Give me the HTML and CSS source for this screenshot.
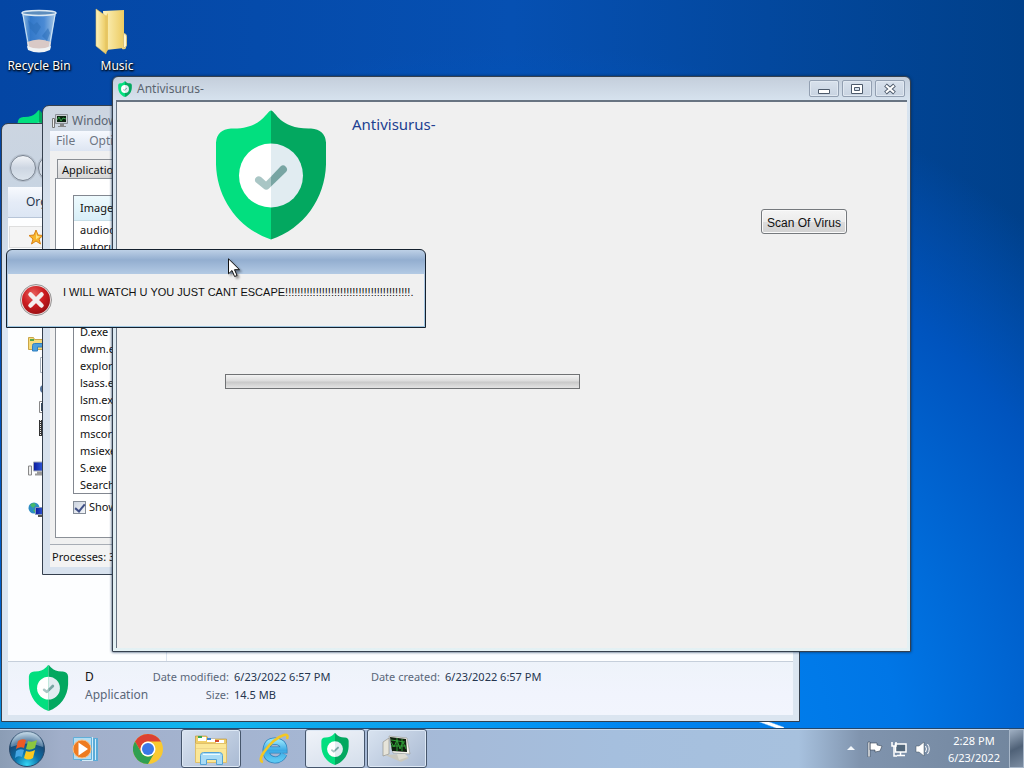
FILE: index.html
```html
<!DOCTYPE html>
<html lang="en">
<head>
<meta charset="utf-8">
<meta name="viewport" content="width=device-width, initial-scale=1">
<title>Desktop</title>
<link rel="stylesheet" href="styles.css">
</head>
<body>
<svg class="defs" aria-hidden="true">
  <defs>
    <linearGradient id="glass" x1="0" x2="1"><stop offset="0" stop-color="#b9dcf3"/><stop offset=".25" stop-color="#3f85d2"/><stop offset=".65" stop-color="#5c9be0"/><stop offset="1" stop-color="#d5ecf8"/></linearGradient>
    <linearGradient id="fold" x1="0" x2="1"><stop offset="0" stop-color="#fdf3bd"/><stop offset="1" stop-color="#eccb62"/></linearGradient>
    <radialGradient id="orb" cx=".5" cy=".95" r=".9"><stop offset="0" stop-color="#35d6f5"/><stop offset=".4" stop-color="#0b70a8"/><stop offset=".75" stop-color="#174a78"/><stop offset="1" stop-color="#a8c3d6"/></radialGradient>
    <radialGradient id="red" cx=".4" cy=".3" r=".8"><stop offset="0" stop-color="#e8605c"/><stop offset=".5" stop-color="#cc1c20"/><stop offset="1" stop-color="#8e0c10"/></radialGradient>
    <linearGradient id="ie" x1="0" y1="0" x2="0" y2="1"><stop offset="0" stop-color="#8fe0fa"/><stop offset=".5" stop-color="#3aa8e4"/><stop offset="1" stop-color="#5cc8f2"/></linearGradient>
    <linearGradient id="screen" x1="0" x2="1"><stop offset="0" stop-color="#0a1a9c"/><stop offset="1" stop-color="#3a6ae8"/></linearGradient>
  </defs>
  <symbol id="shield" viewBox="0 0 110 129">
    <path fill="#02df7f" d="M55 0C50 1 46 19 15 18Q1 19 0 32V54C1 88 22 118 55 129Z"/>
    <path fill="#03a860" d="M55 0C60 1 64 19 95 18Q109 19 110 32V54C109 88 88 118 55 129Z"/>
    <path fill="#fff" d="M55 33A32 32 0 0 0 55 97Z"/>
    <path fill="#e1ecf1" d="M55 33A32 32 0 0 1 55 97Z"/>
    <path fill="#a9c6c5" d="M39.500 71.500a3.800 3.800 0 0 1 5.500-5l5 4.500 5-5v10l-2 2a4 4 0 0 1-5.500 0z"/>
    <path fill="#78a5a3" d="M55 66l9.500-10a3.900 3.900 0 0 1 5.500 5.500L55 76z"/>
  </symbol>
  <symbol id="monitor" viewBox="0 0 16 14">
    <path fill="#eee" stroke="#777" d="M.5 4.500h2v9h-2z"/>
    <path fill="#c9cdd2" stroke="#8b9098" d="M3.500 .5h12v9h-12z"/>
    <path fill="#0b2410" d="M5 2h9v6H5z"/>
    <path fill="none" stroke="#35a049" d="M5 6l2-3 2 4 2-3 3 1"/>
    <path fill="#888" d="M8 10h4v2h2v1H6v-1h2z"/>
  </symbol>
  <symbol id="pc" viewBox="0 0 18 15">
    <path fill="#eee" stroke="#888" d="M.5 4.500h3v9h-3z"/>
    <path fill="url(#screen)" stroke="#a8adb8" d="M5.500 .5h12v9h-12z"/>
    <path fill="#999" d="M9 10h5v2h2v2H7v-2h2z"/>
  </symbol>
  <symbol id="folder-lib" viewBox="0 0 36 32">
    <path fill="#f0cf69" stroke="#b98d33" stroke-width=".6" d="M2.500 6V3h11l2 3h18v23h-31z"/>
    <path fill="#fff" d="M5 4h8v4H5zM14 6h8v3h-8zM23 7h8v3h-8z"/>
    <path fill="#35a852" d="M5 3h4v2H5z"/><path fill="#d54c2e" d="M22 7h4v2h-4z"/><path fill="#3b84d6" d="M14 5h4v2h-4z"/>
    <path fill="#fbe797" stroke="#e0c06a" d="M2.500 10.500h31v19h-31z"/>
    <path fill="none" stroke="#eed68a" d="M3 15.500h30"/>
    <path fill="#a8dbf5" stroke="#55a2d4" d="M7.500 31.500v-9q0-3 3-3h16q3 0 3 3v9h-6v-5h-10v5z"/>
    <path stroke="#eafaff" d="M10 21.500h17" fill="none"/>
  </symbol>
</svg>

<main class="desktop">
  <ul class="shortcuts">
    <li class="shortcut">
      <svg class="shortcut-icon" viewBox="0 0 48 48" aria-hidden="true">
        <path fill="url(#glass)" fill-opacity=".8" d="M7 4h34l-6 37q-11 5-22 0z"/>
        <path fill="#d9c9c6" d="M12 34q12-5 24 0l-1 7q-11 5-22 0z"/>
        <path fill="#f0f3f5" d="M12 38q12 5 24 0l-1 4q-11 5-22 0z"/>
        <path fill="#2d6fbb" fill-opacity=".6" d="M15 20l7-6 4 5-5 8zM27 28l6-8 2 5-3 8zM13 12l6 5-4 4z"/>
        <ellipse cx="24" cy="5" rx="17" ry="2.500" fill="#5d8dbd" stroke="#dce9f3" stroke-width="1.500"/>
        <path fill="none" stroke="#e3f2fb" stroke-opacity=".8" d="M8 7l6 33M40 7l-6 33"/>
      </svg>
      <span>Recycle Bin</span>
    </li>
    <li class="shortcut">
      <svg class="shortcut-icon" viewBox="0 0 48 48" aria-hidden="true">
        <path fill="url(#fold)" d="M10 3L31 2v38l-18 2z"/>
        <path fill="#e9c863" d="M13 8l2-3v37l-2 3z"/>
        <path fill="#f0d579" d="M31 26l2 1v13q-1 2-4 1z"/>
        <path fill="#fff6cf" stroke="#d8c37c" d="M30.500 25.500q3 0 3 3v9q-1 3-3 2z"/>
        <path fill="url(#fold)" stroke="#dfc067" stroke-width=".6" d="M3 1l10 7v38L3 38z"/>
      </svg>
      <span>Music</span>
    </li>
    <li class="shortcut">
      <svg class="shortcut-icon" aria-hidden="true"><use href="#shield"/></svg>
      <span>D</span>
    </li>
  </ul>

  <section class="window explorer" aria-label="File explorer">
    <div class="explorer-nav">
      <button class="round" aria-label="Back"></button><button class="round forward" aria-label="Forward"></button>
    </div>
    <div class="explorer-body">
      <div class="toolbar"><button class="plain">Organize</button></div>
      <div class="explorer-main">
        <nav class="tree" aria-label="Places">
          <div class="favorites"><svg class="star" viewBox="0 0 16 16" aria-hidden="true"><path fill="#f8b52c" stroke="#d98316" d="M8 1l2 5 5 .5-4 3.500 1.500 5L8 12l-4.500 3L5 10 1 6.500 6 6z"/><path fill="#fde58a" d="M8 3l1 4 3 .5-3 2-1 1z"/></svg></div>
          <svg class="node libraries" viewBox="0 0 16 16" aria-hidden="true"><path fill="#f6db7c" stroke="#c9a548" d="M.5 1.500h5l1 2h9v10H.5z"/><path fill="#52a84e" d="M2 3h4v2H2z"/><path fill="#4da0dc" stroke="#2f7fc0" d="M4.500 15V9.500q0-2 2-2h9V11h-6v4z"/></svg>
          <svg class="node leaf" viewBox="0 0 16 16" aria-hidden="true"><path fill="#fff" stroke="#a8b2bd" d="M1.500 .5h12v15h-12z"/></svg>
          <svg class="node leaf" viewBox="0 0 16 16" aria-hidden="true"><circle cx="5" cy="11" r="4" fill="#55749b"/><path fill="none" stroke="#55749b" stroke-width="2" d="M8 11V1l5 2"/></svg>
          <svg class="node leaf" viewBox="0 0 16 16" aria-hidden="true"><path fill="#fff" stroke="#888" d="M.5 2.500h14v11H.5z"/><path fill="#34495e" d="M2 4h11v8H2z"/></svg>
          <svg class="node leaf" viewBox="0 0 16 16" aria-hidden="true"><path fill="#333" d="M0 0h15v16H0z"/><path stroke="#eee" stroke-width="1" stroke-dasharray="1 1" d="M1.500 0v16"/></svg>
          <svg class="node computer" aria-hidden="true"><use href="#pc"/></svg>
          <svg class="node network" viewBox="0 0 18 16" aria-hidden="true"><circle cx="6" cy="6" r="5.500" fill="#2c8cc4"/><path fill="#45b86a" d="M2 3q4-4 6 0l-3 3zM5 8l4-1-2 4z"/><path fill="url(#screen)" stroke="#8899b8" d="M7.500 5.500h10v7h-10z"/><path fill="#555" d="M10 13h5v2h-5z"/></svg>
        </nav>
        <div class="files"></div>
      </div>
      <footer class="details">
        <svg class="details-icon" aria-hidden="true"><use href="#shield"/></svg>
        <div class="details-name"><strong>D</strong><span>Application</span></div>
        <dl class="facts"><dt>Date modified:</dt><dd>6/23/2022 6:57 PM</dd><dt>Size:</dt><dd>14.5 MB</dd></dl>
        <dl class="facts"><dt>Date created:</dt><dd>6/23/2022 6:57 PM</dd></dl>
      </footer>
    </div>
  </section>

  <section class="window taskmgr" aria-label="Task manager">
    <header class="task-title"><svg class="mini-monitor" aria-hidden="true"><use href="#monitor"/></svg><span>Windows Task Manager</span></header>
    <div class="task-body">
      <nav class="menu"><button class="plain">File</button><button class="plain">Options</button></nav>
      <div class="tabs"><button class="tab">Applications</button></div>
      <div class="tab-page">
        <table class="processes">
          <thead><tr><th>Image Name</th></tr></thead>
          <tbody>
            <tr><td>audiodg.exe</td></tr><tr><td>autoruns.exe</td></tr><tr><td></td></tr><tr><td></td></tr>
            <tr><td></td></tr><tr><td></td></tr><tr><td>D.exe</td></tr><tr><td>dwm.exe</td></tr>
            <tr><td>explorer.exe</td></tr><tr><td>lsass.exe</td></tr><tr><td>lsm.exe</td></tr><tr><td>mscorsvw.exe</td></tr>
            <tr><td>mscorsvw.exe</td></tr><tr><td>msiexec.exe</td></tr><tr><td>S.exe</td></tr><tr><td>SearchIndexer.exe</td></tr>
          </tbody>
        </table>
        <label class="show-all"><input type="checkbox" checked>Show processes from all users</label>
      </div>
      <footer class="task-status">Processes: 37</footer>
    </div>
  </section>

  <section class="window app" aria-labelledby="app-title">
    <header class="app-title">
      <svg class="app-icon" aria-hidden="true"><use href="#shield"/></svg>
      <span id="app-title">Antivisurus-</span>
      <div class="caption">
        <button aria-label="Minimize"><svg viewBox="0 0 12 12" aria-hidden="true"><path fill="#fff" stroke="#4d5a6b" d="M.5 6.500h11v4H.5z"/></svg></button>
        <button aria-label="Maximize"><svg viewBox="0 0 12 12" aria-hidden="true"><path fill="#fff" stroke="#4d5a6b" d="M.5 1.500h11v9H.5z"/><path fill="#d5dfeb" stroke="#4d5a6b" d="M3.500 4.500h5v3h-5z"/></svg></button>
        <button aria-label="Close"><svg viewBox="0 0 12 12" aria-hidden="true"><path stroke="#4d5a6b" stroke-width="4" d="M1.500 2l9 8M10.500 2l-9 8"/><path stroke="#fff" stroke-width="2.200" d="M2 2.500l8 7M10 2.500l-8 7"/></svg></button>
      </div>
    </header>
    <div class="client">
      <div class="hero">
        <svg class="logo" aria-hidden="true"><use href="#shield"/></svg>
        <h1>Antivisurus-</h1>
        <button class="scan">Scan Of Virus</button>
      </div>
      <progress class="bar" value="0" max="100" aria-label="Scan progress"></progress>
    </div>
  </section>

  <section class="window dialog" role="alertdialog" aria-labelledby="message">
    <div class="dialog-body">
      <svg class="error" viewBox="0 0 32 32" aria-hidden="true"><circle cx="16" cy="16" r="15.500" fill="#ecdcdc" stroke="#969696"/><circle cx="16" cy="16" r="14" fill="url(#red)"/><path stroke="#f4eeee" stroke-width="4.500" stroke-linecap="round" d="M10.500 10.500l11 11M21.500 10.500l-11 11"/></svg>
      <p id="message">I WILL WATCH U YOU JUST CANT ESCAPE!!!!!!!!!!!!!!!!!!!!!!!!!!!!!!!!!!!!!!!!!.</p>
    </div>
  </section>

  <svg class="cursor" viewBox="0 0 13 20" aria-hidden="true"><path fill="#fff" stroke="#111" d="M.5 .8v15l3.500-3.300 2.600 6 2.500-1-2.600-5.800h5z"/></svg>
</main>

<footer class="taskbar">
  <button class="start" aria-label="Start"><svg viewBox="0 0 38 38" aria-hidden="true"><circle cx="19" cy="19" r="17.500" fill="url(#orb)" stroke="#28496a"/><path fill="#dcecf5" fill-opacity=".35" d="M3 17a16 16 0 0 1 32 0q-16-7-32 0z"/><path fill="#ee5a24" d="M10 11q4-3 8-1l-2 8q-4-2-8 1z"/><path fill="#8cc63f" d="M20 11q4 2 9-1l-2 8q-5 3-9 1z"/><path fill="#45a6e4" d="M8 21q4-3 8-1l-2 7q-4-2-7 1z"/><path fill="#fbc91f" d="M18 21q4 2 9-1l-2 8q-5 3-9 0z"/></svg></button>
  <button class="task" aria-label="Media Player"><svg viewBox="0 0 30 30" aria-hidden="true"><path fill="#5aabd8" d="M9 4h18v23H9z"/><path fill="#d0ecf9" d="M11 3h11v24H11zM24 5h1v21h-1z"/><path fill="#b2ddf3" stroke="#62afd8" d="M2.500 3.500h18v22h-18z"/><circle cx="11" cy="15" r="9" fill="#ee7b20" stroke="#f9bd82"/><path fill="#fff" d="M7.500 8.500L17 15l-9.500 6.500z"/></svg></button>
  <button class="task" aria-label="Chrome"><svg viewBox="0 0 30 30" aria-hidden="true"><circle cx="15" cy="15" r="15" fill="#f9c930"/><path fill="#dc4132" d="M2 7.500A15 15 0 0 1 28 7.500H15A7.500 7.500 0 0 0 8.500 18.700z"/><path fill="#2f9f50" d="M2 7.500A15 15 0 0 0 15 30l6.500-11.300A7.500 7.500 0 0 1 8.500 18.700z"/><circle cx="15" cy="15" r="7.500" fill="#fff"/><circle cx="15" cy="15" r="6" fill="#3b78e7"/></svg></button>
  <button class="task open" aria-label="Explorer"><svg class="wide" viewBox="0 0 36 32" aria-hidden="true"><use href="#folder-lib"/></svg></button>
  <button class="task" aria-label="Internet Explorer"><svg viewBox="0 0 30 30" aria-hidden="true"><path fill="none" stroke="#2d83bd" stroke-width="7" d="M25 20q-3 6-9 6-9-1-9-10 1-9 9-9 9 1 9 9H9"/><path fill="none" stroke="url(#ie)" stroke-width="5.500" d="M25 20q-3 6-9 6-9-1-9-10 1-9 9-9 9 1 9 9H9"/><path fill="none" stroke="#f3c724" stroke-width="2.500" d="M4 28q-5-1 1-10Q15 4 25 1q5-1 3 4"/></svg></button>
  <button class="task open active" aria-label="Antivisurus-"><svg aria-hidden="true"><use href="#shield"/></svg></button>
  <button class="task open" aria-label="Task manager"><svg class="wide" viewBox="0 0 36 32" aria-hidden="true"><path fill="#e6e4da" stroke="#8b8a80" stroke-width=".6" d="M4 9l6-4v16l-6 2z"/><path fill="#c9c8be" d="M6 22l17-1 7 4-8 4z"/><path fill="#f4f3ee" stroke="#92928b" stroke-width=".6" d="M10 3l18 2 3 16-17-1z"/><path fill="#10200f" d="M11 4l16 2 1 13-15-1z"/><path fill="none" stroke="#2e9c36" d="M12 9l3 5 3-7 3 9 3-7 3 7M12 13h15M12 7l14 2M18 5v13M23 6v12"/><path fill="#dddcd3" d="M18 21h8l3 3-9 3z"/></svg></button>
  <div class="tray">
    <svg class="arrow" viewBox="0 0 8 5" aria-hidden="true"><path fill="#f4f8fc" d="M4 0l4 4H0z"/></svg>
    <svg viewBox="0 0 16 16" aria-hidden="true"><path fill="#fff" stroke="#354354" stroke-width=".6" d="M1 1h2v15H1zM3 2h7v2l5 1-2 5-5 1V9H3z"/></svg>
    <svg viewBox="0 0 16 16" aria-hidden="true"><path fill="#52677b" stroke="#fff" stroke-width="1.500" d="M4.500 3h10.500v8H4.500z"/><path fill="none" stroke="#fff" stroke-width="1.500" d="M1 1v4h4V1M3 5v10h3M9.500 11v3M6 14.500h8"/></svg>
    <svg viewBox="0 0 16 16" aria-hidden="true"><path fill="#fff" stroke="#42505f" stroke-width=".5" d="M1 5h3l5-4v14l-5-4H1z"/><path fill="none" stroke="#fff" d="M10.500 5q2 3 0 6M12.500 3q3.500 5 0 10"/></svg>
    <time class="clock" datetime="2022-06-23T14:28"><span>2:28 PM</span><span>6/23/2022</span></time>
    <button class="peek" aria-label="Show desktop"></button>
  </div>
</footer>
</body>
</html>
```
FILE: styles.css
```css
* { box-sizing: border-box; }
body {
  margin: 0;
  min-height: 100vh;
  display: flex;
  flex-direction: column;
  font: 12px/18px "Noto Sans", "Open Sans", sans-serif;
  color: #111;
  overflow: hidden;
}
button { font: inherit; color: inherit; }
.defs { position: absolute; width: 0; height: 0; }
.desktop {
  flex: 1;
  position: relative;
  background:
    linear-gradient(20deg, transparent 36%, #fff 44%, #fff 56%, transparent 64%) 756px 100% / 28px 8px no-repeat,
    radial-gradient(ellipse 420px 90px at 20% 100%, #12b8ee, transparent),
    radial-gradient(ellipse 780px 720px at 50% 105%, #008cf6 0%, #0076e6 50%, #0054be 80%, transparent 100%),
    linear-gradient(90deg, #0446a4, #0650b2 50%, #00408a);
}
.shortcuts {
  margin: 0;
  padding: 7px 0 0;
  list-style: none;
  display: grid;
  grid-template-columns: 78px 78px;
  grid-auto-rows: 103px;
}
.shortcut {
  display: flex;
  flex-direction: column;
  align-items: center;
  color: #fff;
  text-shadow: 0 1px 2px #000, 1px 1px 2px #000;
}
.shortcut-icon { width: 48px; height: 50px; }

.window { position: absolute; display: flex; flex-direction: column; border: 1px solid #35404e; }

.explorer {
  left: 1px; top: 123px; width: 799px; height: 599px;
  padding: 0 6px 6px;
  border-radius: 7px 7px 0 0;
  background: linear-gradient(#ccd5e1, #c8d4e2 60px, #dbe6f3 200px, #dbe5f0);
}
.explorer-nav { height: 63px; padding: 31px 0 0 2px; display: flex; gap: 2px; }
.round {
  width: 26px; height: 26px; padding: 0;
  border: 1px solid #77818e; border-radius: 50%;
  background: linear-gradient(#f1f4f8, #cdd6e2 50%, #dce4ed);
  box-shadow: 0 0 0 1px #b5bfcc;
}
.explorer-body { flex: 1; display: flex; flex-direction: column; background: #fdfeff; }
.toolbar { height: 31px; padding: 6px 18px; background: linear-gradient(#f8fafe, #e5ecf7 50%, #dce6f4); border-bottom: 1px solid #b7c5d8; }
.plain { padding: 0; border: 0; background: none; color: #29384e; line-height: 18px; }
.explorer-main { flex: 1; display: flex; }
.tree { width: 159px; border-right: 1px solid #dce4ef; padding-top: 8px; display: flex; flex-direction: column; align-items: flex-start; }
.favorites { align-self: stretch; height: 22px; margin: 0 8px 0 1px; padding-left: 18px; border: 1px solid #dedede; background: #f4f4f4; }
.star { width: 16px; height: 16px; margin-top: 2px; }
.node { width: 16px; height: 16px; margin: 0 0 5px 31px; }
.libraries { margin: 88px 0 5px 20px; }
.computer { width: 18px; margin: 20px 0 25px 20px; }
.network { width: 18px; margin-left: 20px; }
.files { flex: 1; }
.details {
  height: 54px; padding: 3px 18px 0 20px;
  display: flex; align-items: flex-start;
  border-top: 1px solid #c6cfdb;
  background: linear-gradient(#eef3fa, #f1f4fd 60%, #f2f5fd);
  color: #5a6779;
}
.details-icon { width: 41px; height: 46px; }
.details-name { width: 67px; padding: 3px 0 0 16px; display: flex; flex-direction: column; flex: none; }
.details-name strong { font-weight: normal; color: #111; }
.facts { margin: 0; padding-top: 3px; width: 211px; display: grid; grid-template-columns: 93px auto; column-gap: 5px; font-size: 11px; white-space: nowrap; }
.facts dt { text-align: right; }
.facts dd { margin: 0; color: #25354f; }

.taskmgr {
  left: 42px; top: 105px; width: 400px; height: 470px;
  padding: 0 7px 7px;
  border-radius: 7px 7px 0 0;
  background: linear-gradient(#ccd5e0, #d6e1ee 100px, #d8e2ee);
}
.task-title { height: 28px; padding: 6px 2px 0; display: flex; align-items: center; gap: 4px; color: #5c6674; }
.mini-monitor { width: 16px; height: 14px; }
.task-body { flex: 1; display: flex; flex-direction: column; background: #f0f0f0; }
.menu { height: 20px; padding: 1px 6px; display: flex; gap: 14px; background: linear-gradient(#f6f9fe, #dde5f2); }
.menu .plain { color: #6d7582; }
.tabs { padding: 8px 7px 0; }
.tab { height: 18px; padding: 0 4px; font-size: 11px; line-height: 17px; border: 1px solid #8a8e94; border-bottom: 0; background: linear-gradient(#f2f2f2, #d8d8d8); display: block; }
.task-title { height: 30px; padding-top: 4px; }
.tab { height: 19px; }
.tab-page { margin: 0 5px; padding: 16px 17px 21px; flex: 1; border: 1px solid #8b9097; background: #fff; display: flex; flex-direction: column; font-size: 11px; }
.processes { width: 100%; border: 1px solid #828790; border-spacing: 0; }
.processes th { height: 25px; padding: 0 6px; font-weight: normal; text-align: left; background: linear-gradient(#eefafd, #d8eff8); border-bottom: 1px solid #c8dfe8; line-height: 16px; }
.processes td { height: 17px; padding: 0 6px; line-height: 17px; }
.show-all { margin-top: 4px; display: flex; align-items: center; gap: 3px; }
.show-all input { appearance: none; width: 13px; height: 13px; margin: 0; border: 1px solid #858d98; background: linear-gradient(135deg, #ccd3df, #f4f6f9); display: grid; place-items: center; }
.show-all input::before { content: ""; width: 4px; height: 8px; margin-bottom: 2px; border: solid #3f4f86; border-width: 0 2px 2px 0; rotate: 40deg; }
.task-status { height: 23px; margin-top: 6px; padding: 3px 2px 0; border-top: 1px solid #a8adb5; font-size: 11px; background: #f3f3f3; }

.app {
  left: 112px; top: 76px; width: 799px; height: 576px;
  padding: 0 3px 3px;
  border-radius: 6px 6px 0 0;
  background: linear-gradient(#c4cedb, #d7e3ef 24px, #e4f1f4);
  box-shadow: 0 0 3px #08284e;
}
.app-title { height: 23px; padding: 0 2px; display: flex; align-items: center; gap: 5px; color: #5a6470; }
.app-icon { width: 14px; height: 16px; }
.caption { margin-left: auto; display: flex; gap: 3px; }
.caption button { width: 30px; height: 17px; padding: 0; display: grid; place-items: center; border: 1px solid #929fb1; border-radius: 2px; background: linear-gradient(#d8e1ec, #c8d3e1); box-shadow: inset 0 0 0 1px #e0e8f1; }
.caption svg { width: 12px; height: 12px; }
.client { flex: 1; padding: 8px 60px 0 99px; border: 1px solid #687482; border-width: 2px 0 0 1px; background: #f0f0f0; }
.hero { display: flex; align-items: flex-start; }
.logo { width: 110px; height: 130px; flex: none; }
.hero h1 { margin: 3px 0 0 26px; font-size: 15px; line-height: 22px; font-weight: normal; color: #213f91; }
.scan { margin: 99px 0 0 auto; width: 86px; height: 25px; padding: 2px 0 0; font: 12px/18px "Liberation Sans", Arial, sans-serif; border: 1px solid #75797d; border-radius: 3px; background: linear-gradient(#f4f4f4, #ececec 50%, #dcdcdc 52%, #d2d2d2); box-shadow: inset 0 0 0 1px #fafafa; white-space: nowrap; }
.bar { appearance: none; display: block; width: 355px; height: 15px; margin: 134px 0 0 9px; border: 1px solid #707274; }
.bar::-webkit-progress-bar { background: linear-gradient(#f3f3f3, #dcdcdc 45%, #c9c9c9 55%, #e3e3e3); }

.dialog {
  left: 6px; top: 249px; width: 420px; min-height: 79px;
  padding: 24px 1px 1px 1px;
  border-color: #14202e;
  border-radius: 6px 6px 0 0;
  background: linear-gradient(#bdd0e6, #93aed0 10px, #b3cae4 24px, #9fc6e0);
}
.dialog-body { flex: 1; padding: 10px 12px; display: flex; gap: 11px; background: #f0f0f0; }
.error { width: 32px; height: 32px; flex: none; }
.dialog p { margin: 0; font: 11px/16px "Liberation Sans", Arial, sans-serif; white-space: nowrap; }
.cursor { position: absolute; left: 228px; top: 258px; width: 13px; height: 20px; filter: drop-shadow(2px 2px 1px #0006); }

.taskbar {
  height: 40px;
  display: flex;
  align-items: stretch;
  gap: 4px;
  border-top: 1px solid #24476c;
  background: linear-gradient(90deg, #8b9db5, #a1afca 6%, #a5b6d3 30%, #a5bfde 60%, #a7c1de 78%, #8094ae 84%, #71859d);
  box-shadow: inset 0 1px #c6d8ec;
}
.start { width: 53px; padding: 0; border: 0; background: none; display: grid; place-items: center; }
.start svg { width: 38px; height: 38px; }
.task { width: 58px; padding: 0; border: 1px solid transparent; border-radius: 3px; background: none; display: grid; place-items: center; }
.task svg { width: 30px; height: 32px; }
.task .wide { width: 36px; }
.task.open { width: 60px; border-color: #46566c; background: linear-gradient(135deg, #d9e3f0, #a9bad3); box-shadow: inset 0 0 0 1px #dde8f5; }
.task.open.active { margin-left: -2px; background: linear-gradient(160deg, #f0f3f9, #d4deeb); }
.task.open + .task.open { margin-left: -2px; }
.tray { margin-left: auto; display: flex; align-items: center; gap: 8px; }
.tray svg { width: 16px; height: 16px; }
.tray .arrow { width: 8px; height: 5px; margin-right: 4px; }
.clock { width: 62px; margin: 0 0 0 4px; display: flex; flex-direction: column; align-items: center; color: #fff; font-size: 11px; line-height: 17px; }
.peek { align-self: stretch; width: 15px; margin-left: -4px; padding: 0; border: 1px solid #a8b7c9; background: linear-gradient(155deg, #9fafc2, #4f6177 50%, #7c8da2); }
```
